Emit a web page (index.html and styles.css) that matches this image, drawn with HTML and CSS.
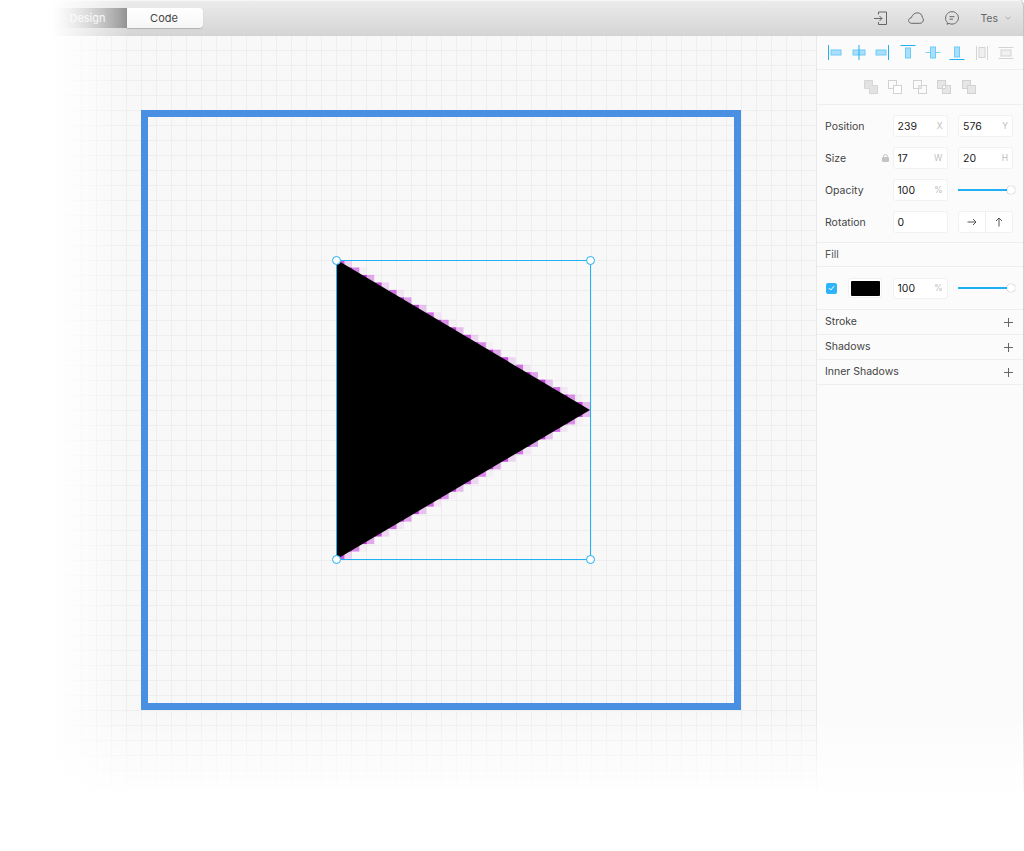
FILE: index.html
```html
<!DOCTYPE html>
<html>
<head>
  <meta name="viewport" content="width=device-width, initial-scale=1.0">
  <link rel="stylesheet" href="styles.css">
</head>
<body>
  <div class="app">
    <header class="toolbar">
      <div class="mode-switch">
        <div class="mode mode-design">Design</div>
        <div class="mode mode-code">Code</div>
      </div>
      <div class="toolbar-right">
        <svg class="tool-icon" width="13" height="14" viewBox="0 0 13 14">
          <path d="M4.500 3.500V1H12.500V13.500H4.500V11"/>
          <path d="M0 7.500H8M5.500 5L8 7.500L5.500 10"/>
        </svg>
        <svg class="tool-icon" width="16" height="12" viewBox="0 0 16 12">
          <path d="M3.800 11.300C1.900 11.300 .6 10.100 .6 8.600C.6 7.100 1.700 6 3.200 5.900C4.300 2.900 6.500 .8 9.300 .8C12.300 .8 14.200 2.800 14.200 5.200C15 5.900 15.400 6.800 15.400 7.800C15.400 9.800 13.800 11.300 11.800 11.300Z"/>
        </svg>
        <svg class="tool-icon" width="14" height="14" viewBox="0 0 14 14">
          <path d="M2.500 11.600C1.200 10.500 .6 9 .6 7.200C.6 3.600 3.400 .7 7 .7C10.600 .7 13.400 3.500 13.400 6.900C13.400 10.300 10.600 13.100 7 13.100C5.900 13.100 4.900 12.900 4 12.400L2 13.300Z"/>
          <path d="M4.500 5.700H9.500M4.500 8.200H8"/>
        </svg>
        <div class="user">Tes
          <svg class="chevron" width="6" height="4" viewBox="0 0 6 4"><path d="M.5 .7L3 3.200L5.500 .7"/></svg>
        </div>
      </div>
    </header>

    <div class="workspace">
      <main class="canvas">
        <div class="frame"></div>
        <svg id="shape" class="shape" width="254" height="300" viewBox="0 0 254 300">
          <g id="fringe"></g>
          <polygon points="0,0 253,150 0,299" fill="#000"/>
        </svg>
        <div class="selection">
          <span class="handle handle-tl"></span>
          <span class="handle handle-tr"></span>
          <span class="handle handle-bl"></span>
          <span class="handle handle-br"></span>
        </div>
      </main>

      <aside class="inspector">
        <div class="section align-row">
          <div class="align-group">
            <svg class="align-icon" viewBox="0 0 18 18"><rect class="bar" x="5" y="6" width="10" height="5"/><path class="edge" d="M2.500 1V16"/></svg>
            <svg class="align-icon" viewBox="0 0 18 18"><rect class="bar" x="3" y="6" width="12" height="5"/><path class="edge" d="M9 1V16"/></svg>
            <svg class="align-icon" viewBox="0 0 18 18"><rect class="bar" x="3" y="6" width="10" height="5"/><path class="edge" d="M15.500 1V16"/></svg>
          </div>
          <div class="align-group wide">
            <svg class="align-icon" viewBox="0 0 18 18"><rect class="bar" x="6.500" y="4" width="5" height="10"/><path class="edge" d="M1.500 1.500H16.500"/></svg>
            <svg class="align-icon" viewBox="0 0 18 18"><path class="edge soft" d="M1.500 8.500H16.500"/><rect class="bar" x="6.500" y="3" width="5" height="11"/></svg>
            <svg class="align-icon" viewBox="0 0 18 18"><rect class="bar" x="6.500" y="3" width="5" height="10"/><path class="edge" d="M1.500 15.500H16.500"/></svg>
            <svg class="align-icon off" viewBox="0 0 18 18"><rect class="bar" x="6" y="3.500" width="6" height="10"/><path class="edge" d="M3.500 2V16M14.500 2V16"/></svg>
            <svg class="align-icon off" viewBox="0 0 18 18"><rect class="bar" x="4" y="6" width="10" height="6"/><path class="edge" d="M1.500 3.500H16.500M1.500 14.500H16.500"/></svg>
          </div>
        </div>

        <div class="section bool-row">
          <svg class="bool-icon" viewBox="0 0 14 14"><path class="solid" d="M.5 .5H8.500V5.500H13.500V13.500H5.500V8.500H.5Z"/></svg>
          <svg class="bool-icon" viewBox="0 0 14 14"><rect class="ghost" x=".5" y=".5" width="8" height="8"/><rect class="front" x="5.500" y="5.500" width="8" height="8"/></svg>
          <svg class="bool-icon" viewBox="0 0 14 14"><rect class="ghost" x=".5" y=".5" width="8" height="8"/><rect class="ghost" x="5.500" y="5.500" width="8" height="8"/><rect class="fill" x="5.500" y="5.500" width="3" height="3"/></svg>
          <svg class="bool-icon" viewBox="0 0 14 14"><rect class="ghost fill" x=".5" y=".5" width="8" height="8"/><rect class="ghost fill" x="5.500" y="5.500" width="8" height="8"/><rect class="front" x="5.500" y="5.500" width="3" height="3"/></svg>
          <svg class="bool-icon" viewBox="0 0 14 14"><rect class="ghost fill" x=".5" y=".5" width="8" height="8"/><rect class="ghost fill" x="5.500" y="5.500" width="8" height="8"/></svg>
        </div>

        <div class="section props">
          <div class="prop-row">
            <div class="prop-label">Position</div>
            <div class="field"><span>239</span><em>X</em></div>
            <div class="field"><span>576</span><em>Y</em></div>
          </div>
          <div class="prop-row">
            <div class="prop-label">Size
              <svg class="lock" width="7" height="8" viewBox="0 0 7 8"><rect x="0" y="3" width="7" height="5" rx="1"/><path d="M1.500 3.500V2.500A2 2 0 0 1 5.500 2.500V3.500"/></svg>
            </div>
            <div class="field"><span>17</span><em>W</em></div>
            <div class="field"><span>20</span><em>H</em></div>
          </div>
          <div class="prop-row">
            <div class="prop-label">Opacity</div>
            <div class="field"><span>100</span><em>%</em></div>
            <div class="slider"><i></i></div>
          </div>
          <div class="prop-row">
            <div class="prop-label">Rotation</div>
            <div class="field"><span>0</span></div>
            <div class="flip-group">
              <div class="flip"><svg width="10" height="10" viewBox="0 0 10 10"><path d="M.5 5H9M6 2L9 5L6 8"/></svg></div>
              <div class="flip"><svg width="10" height="10" viewBox="0 0 10 10"><path d="M5 9.500V1M2 4L5 1L8 4"/></svg></div>
            </div>
          </div>
        </div>

        <div class="section fill-head">Fill</div>
        <div class="section fill-row">
          <div class="check"><svg width="7" height="6" viewBox="0 0 7 6"><path d="M.8 3L2.800 5L6.200 1"/></svg></div>
          <div class="swatch"><i></i></div>
          <div class="field"><span>100</span><em>%</em></div>
          <div class="slider"><i></i></div>
        </div>
        <div class="section add-row">Stroke<b class="plus"></b></div>
        <div class="section add-row">Shadows<b class="plus"></b></div>
        <div class="section add-row">Inner Shadows<b class="plus"></b></div>
      </aside>
    </div>
  </div>

  <div class="fade-left"></div>
  <div class="fade-bottom"></div>

  <script src="fringe.js"></script>
</body>
</html>
```

FILE: styles.css
```css
body {
  margin: 0;
  background: #fff;
  font-family: "Inter", "Liberation Sans", sans-serif;
  font-size: 10.5px;
  color: #333;
  overflow: hidden;
}

.app {
  display: flex;
  flex-direction: column;
  height: 851px;
}

/* toolbar */
.toolbar {
  display: flex;
  justify-content: space-between;
  align-items: center;
  flex: none;
  height: 36px;
  box-sizing: border-box;
  padding: 0 12px 0 52px;
  background: linear-gradient(#ebebeb, #d4d4d4);
  border-top: 1px solid #f6f6f6;
  border-right: 1px solid #c4c4c4;
  border-top-right-radius: 6px;
  box-shadow: 0 -1px 0 #cccccc;
}

.mode-switch {
  display: flex;
  height: 20px;
  margin-top: -2px;
}

.mode {
  display: flex;
  align-items: center;
  justify-content: center;
  font-size: 11px;
}

.mode-design {
  width: 75px;
  padding-right: 4px;
  box-sizing: border-box;
  color: #f2f2f2;
  background: linear-gradient(90deg, #cfcfcf, #8f8f8f);
}

.mode-code {
  width: 76px;
  padding-right: 2px;
  box-sizing: border-box;
  color: #444;
  background: linear-gradient(#fff, #f6f6f6);
  border-radius: 0 4px 4px 0;
  box-shadow: 0 1px 1px rgba(0, 0, 0, 0.18);
}

.toolbar-right {
  display: flex;
  align-items: center;
  gap: 21px;
  margin-top: -1px;
}

.tool-icon {
  fill: none;
  stroke: #666;
  stroke-width: 1;
}

.user {
  display: flex;
  align-items: center;
  gap: 7px;
  color: #666;
  font-size: 10.5px;
}

.chevron {
  fill: none;
  stroke: #aaa;
}

/* canvas */
.workspace {
  display: flex;
  flex: 1;
  min-height: 0;
}

.canvas {
  position: relative;
  flex: 1;
  background-color: #f8f8f8;
  background-image:
    linear-gradient(90deg, #eeeeee 1px, transparent 1px),
    linear-gradient(#eeeeee 1px, transparent 1px);
  background-size: 15px 15px;
  background-position: 6px 14px;
}

.frame {
  position: absolute;
  left: 141px;
  top: 74px;
  width: 600px;
  height: 600px;
  box-sizing: border-box;
  border: 7.5px solid #4a90e2;
}

.shape {
  position: absolute;
  left: 337px;
  top: 224px;
}

.selection {
  position: absolute;
  left: 336px;
  top: 224px;
  width: 255px;
  height: 300px;
  box-sizing: border-box;
  border: 1px solid #1fb0f5;
}

.handle {
  position: absolute;
  width: 9px;
  height: 9px;
  box-sizing: border-box;
  background: #fff;
  border: 1px solid #1fb0f5;
  border-radius: 50%;
}

.handle-tl { left: -5px; top: -5px; }
.handle-tr { right: -5px; top: -5px; }
.handle-bl { left: -5px; bottom: -5px; }
.handle-br { right: -5px; bottom: -5px; }

/* inspector */
.inspector {
  flex: none;
  width: 208px;
  box-sizing: border-box;
  background: #fbfbfb;
  border-left: 1px solid #e8e8e8;
  border-right: 1px solid #cfcfcf;
}

.section {
  border-bottom: 1px solid #eeeeee;
}

.align-row {
  display: flex;
  align-items: center;
  gap: 8px;
  height: 34px;
  box-sizing: border-box;
  padding-left: 9px;
}

.align-group {
  display: flex;
  gap: 5.5px;
}

.align-group.wide {
  gap: 6.5px;
}

.align-icon {
  width: 18px;
  height: 18px;
}

.bar {
  fill: #a9dffb;
  stroke: #6fcbf8;
}

.edge {
  fill: none;
  stroke: #1fb0f5;
}

.edge.soft {
  stroke: #7fd0f8;
}

.off .bar {
  fill: #f0f0f0;
  stroke: #d4d4d4;
}

.off .edge {
  stroke: #d4d4d4;
}

.bool-row {
  display: flex;
  align-items: center;
  justify-content: center;
  gap: 10.5px;
  height: 35px;
  box-sizing: border-box;
  padding-right: 1px;
}

.bool-icon {
  width: 14px;
  height: 14px;
  overflow: visible;
}

.solid {
  fill: #e2e2e2;
  stroke: #d6d6d6;
}

.ghost {
  fill: none;
  stroke: #d2d2d2;
}

.ghost.fill,
.fill {
  fill: #e6e6e6;
}

.front {
  fill: #fff;
  stroke: #d2d2d2;
}

.props {
  display: flex;
  flex-direction: column;
  gap: 10px;
  height: 138px;
  box-sizing: border-box;
  padding: 10px 10px 0 8px;
}

.prop-row {
  display: flex;
  align-items: center;
  gap: 10.5px;
  height: 22px;
}

.prop-label {
  display: flex;
  align-items: center;
  justify-content: space-between;
  width: 57px;
  color: #444;
}

.lock {
  margin-right: -7px;
  fill: #c4c4c4;
}

.lock path {
  fill: none;
  stroke: #c4c4c4;
}

.field {
  display: flex;
  align-items: center;
  justify-content: space-between;
  width: 55px;
  height: 22px;
  box-sizing: border-box;
  padding: 0 4px;
  background: #fff;
  border: 1px solid #f1f1f1;
  border-radius: 3px;
  color: #222;
}

.field em {
  font-style: normal;
  font-size: 8.5px;
  color: #bdbdbd;
}

.slider {
  position: relative;
  width: 53px;
  height: 2px;
  background: #1fb0f5;
}

.slider i {
  position: absolute;
  right: -4px;
  top: -3px;
  width: 8px;
  height: 8px;
  background: #fff;
  border-radius: 50%;
  box-shadow: 0 0 1px rgba(0, 0, 0, 0.5);
}

.flip-group {
  display: flex;
  width: 55px;
  height: 22px;
  box-sizing: border-box;
  background: #fff;
  border: 1px solid #f1f1f1;
  border-radius: 3px;
}

.flip {
  display: flex;
  align-items: center;
  justify-content: center;
  flex: 1;
}

.flip + .flip {
  border-left: 1px solid #eeeeee;
}

.flip svg {
  fill: none;
  stroke: #555;
}

.fill-head {
  height: 24px;
  box-sizing: border-box;
  padding: 5px 8px 0;
  color: #555;
}

.fill-row {
  display: flex;
  align-items: center;
  height: 43px;
  box-sizing: border-box;
  padding: 0 10px 0 9px;
}

.check {
  display: flex;
  align-items: center;
  justify-content: center;
  width: 11px;
  height: 11px;
  margin-right: 11px;
  background: #2eb4f9;
  border-radius: 2px;
}

.check svg {
  fill: none;
  stroke: #fff;
}

.swatch {
  width: 34px;
  height: 20px;
  box-sizing: border-box;
  margin-right: 10.5px;
  padding: 1.5px;
  background: #fff;
  border: 1px solid #f1f1f1;
  border-radius: 3px;
}

.swatch i {
  display: block;
  height: 100%;
  background: #000;
  border-radius: 1px;
}

.fill-row .slider {
  margin-left: 10px;
}

.fill-row .field {
  height: 21px;
}

.add-row {
  display: flex;
  align-items: center;
  justify-content: space-between;
  height: 25px;
  box-sizing: border-box;
  padding: 0 10px 2px 8px;
  color: #444;
}

.plus {
  width: 9px;
  height: 9px;
  margin-top: 2px;
  background:
    linear-gradient(#666, #666) center / 9px 1px no-repeat,
    linear-gradient(#666, #666) center / 1px 9px no-repeat;
}

/* the picture fades out to the left and the bottom */
.fade-left {
  position: absolute;
  left: 0;
  top: 0;
  width: 130px;
  height: 851px;
  background: linear-gradient(90deg, #fff 52px, rgba(255, 255, 255, 0) 130px);
  pointer-events: none;
}

.fade-bottom {
  position: absolute;
  left: 0;
  top: 711px;
  width: 1024px;
  height: 140px;
  background: linear-gradient(rgba(255, 255, 255, 0), #fff 88px);
  pointer-events: none;
}
```

FILE: fringe.js
```js
// pink edge pixels of the bitmap under the vector triangle
const W = 253, H = 299, COLS = 34, ROWS = 40;
const cellW = W / COLS, cellH = H / ROWS;
const fringe = document.getElementById('fringe');

function inside(x, y) {
  const top = x * (H / 2) / W;
  return y >= top && y <= H - top;
}

for (let c = 0; c < COLS; c++) {
  for (let r = 0; r < ROWS; r++) {
    let hits = 0;
    for (let i = 0; i < 5; i++) {
      for (let j = 0; j < 5; j++) {
        if (inside((c + (i + 0.5) / 5) * cellW, (r + (j + 0.5) / 5) * cellH)) hits++;
      }
    }
    if (hits === 0 || hits === 25) continue;
    const rect = document.createElementNS('http://www.w3.org/2000/svg', 'rect');
    rect.setAttribute('x', c * cellW);
    rect.setAttribute('y', r * cellH);
    rect.setAttribute('width', cellW);
    rect.setAttribute('height', cellH);
    rect.setAttribute('fill', '#b91ed7');
    rect.setAttribute('opacity', hits / 25);
    fringe.appendChild(rect);
  }
}
```
